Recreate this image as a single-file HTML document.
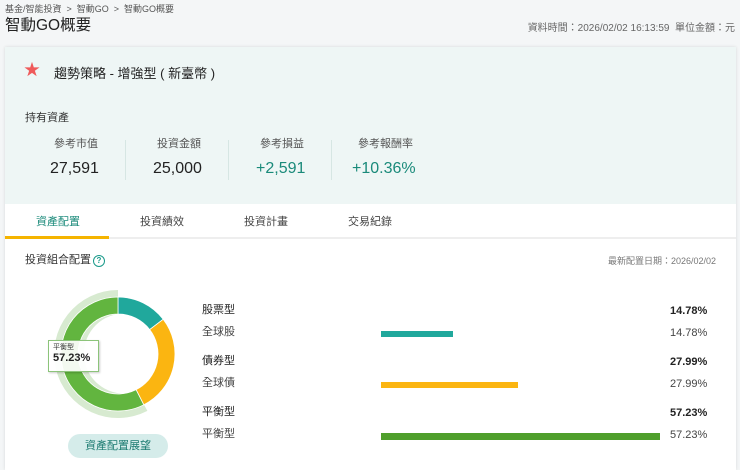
<!DOCTYPE html><html><head><meta charset="utf-8"><style>
*{margin:0;padding:0;box-sizing:border-box}
body{width:740px;height:470px;overflow:hidden;background:#f4f6f7;font-family:"Liberation Sans","Noto Sans CJK TC",sans-serif;color:#333;position:relative}
.a{position:absolute;white-space:nowrap;line-height:1.2}
</style></head><body>
<div class="a" style="left:5px;top:4px;font-size:9px;color:#555">基金/智能投資 &nbsp;&gt;&nbsp; 智動GO &nbsp;&gt;&nbsp; 智動GO概要</div>
<div class="a" style="left:5px;top:17px;font-size:15.5px;color:#222">智動GO概要</div>
<div class="a" style="right:5px;top:23px;font-size:10px;color:#666">資料時間：2026/02/02 16:13:59 &nbsp;單位金額：元</div>
<div class="a" style="left:5px;top:47px;width:731px;height:423px;background:#fff;box-shadow:0 0 3px rgba(0,0,0,.12)"></div>
<div class="a" style="left:5px;top:47px;width:731px;height:157px;background:#eef6f5"></div>
<div class="a" style="left:24px;top:61px;color:#ef5a5a;font-size:16px">★</div>
<div class="a" style="left:54px;top:66px;font-size:13px;color:#222">趨勢策略 - 增強型 ( 新臺幣 )</div>
<div class="a" style="left:25px;top:112px;font-size:11px;color:#333">持有資產</div>
<div class="a" style="left:54px;top:138px;font-size:11px;color:#555">參考市值</div>
<div class="a" style="left:157px;top:138px;font-size:11px;color:#555">投資金額</div>
<div class="a" style="left:260px;top:138px;font-size:11px;color:#555">參考損益</div>
<div class="a" style="left:358px;top:138px;font-size:11px;color:#555">參考報酬率</div>
<div class="a" style="left:50px;top:159px;font-size:16px;color:#222">27,591</div>
<div class="a" style="left:153px;top:159px;font-size:16px;color:#222">25,000</div>
<div class="a" style="left:256px;top:159px;font-size:16px;color:#1a8a7a">+2,591</div>
<div class="a" style="left:352px;top:159px;font-size:16px;color:#1a8a7a">+10.36%</div>
<div class="a" style="left:125px;top:140px;width:1px;height:40px;background:#d6e6e3"></div>
<div class="a" style="left:228px;top:140px;width:1px;height:40px;background:#d6e6e3"></div>
<div class="a" style="left:331px;top:140px;width:1px;height:40px;background:#d6e6e3"></div>
<div class="a" style="left:5px;top:237px;width:731px;height:2px;background:#eee"></div>
<div class="a" style="left:5px;top:236px;width:104px;height:3px;background:#f5b400"></div>
<div class="a" style="left:36px;top:216px;font-size:11px;color:#1a8a7a">資產配置</div>
<div class="a" style="left:140px;top:216px;font-size:11px;color:#444">投資績效</div>
<div class="a" style="left:244px;top:216px;font-size:11px;color:#444">投資計畫</div>
<div class="a" style="left:348px;top:216px;font-size:11px;color:#444">交易紀錄</div>
<div class="a" style="left:25px;top:254px;font-size:11px;color:#333">投資組合配置</div>
<div class="a" style="left:93px;top:255px;width:12px;height:12px;border:1.3px solid #1a9a8a;border-radius:50%;font-size:8px;line-height:10px;text-align:center;color:#1a9a8a;font-weight:bold">?</div>
<div class="a" style="right:24px;top:256px;font-size:9px;color:#777">最新配置日期：2026/02/02</div>
<svg class="a" style="left:50px;top:284px" width="140" height="140" viewBox="50 284 140 140">
<path d="M118,290 A64,64 0 1,0 147.4,410.9 L136.6,391.5 A40,40 0 1,1 118,314 Z" fill="#d7ead0"/>
<path d="M118,297 A57,57 0 0,1 163.2,319.3 L149.7,329.6 A40,40 0 0,0 118,314 Z" fill="#20a89c" stroke="#fff" stroke-width="0.8"/>
<path d="M163.2,319.3 A57,57 0 0,1 143.8,404.8 L136.1,389.7 A40,40 0 0,0 149.7,329.6 Z" fill="#fbb511" stroke="#fff" stroke-width="0.8"/>
<path d="M143.8,404.8 A57,57 0 1,1 118,297 L118,314 A40,40 0 1,0 136.1,389.7 Z" fill="#62b53f" stroke="#fff" stroke-width="0.8"/>
</svg>
<div class="a" style="left:48px;top:340px;width:51px;height:32px;background:rgba(255,255,255,.92);border:1px solid #8cc47a;box-shadow:1px 1px 2px rgba(0,0,0,.2)"></div>
<div class="a" style="left:53px;top:344px;font-size:7px;color:#333">平衡型</div>
<div class="a" style="left:53px;top:352px;font-size:11px;font-weight:bold;color:#222">57.23%</div>
<div class="a" style="left:68px;top:434px;width:100px;height:24px;border-radius:12px;background:#d5ecea;color:#1a7a70;font-size:11px;text-align:center;line-height:24px">資產配置展望</div>
<div class="a" style="left:202px;top:304px;font-size:11px;color:#222">股票型</div>
<div class="a" style="left:202px;top:326px;font-size:11px;color:#444">全球股</div>
<div class="a" style="left:202px;top:355px;font-size:11px;color:#222">債券型</div>
<div class="a" style="left:202px;top:377px;font-size:11px;color:#444">全球債</div>
<div class="a" style="left:202px;top:406px;font-size:11px;color:#222">平衡型</div>
<div class="a" style="left:202px;top:428px;font-size:11px;color:#444">平衡型</div>
<div class="a" style="left:381px;top:331px;width:72px;height:6px;background:#20a89c"></div>
<div class="a" style="left:381px;top:382px;width:137px;height:6px;background:#fbb511"></div>
<div class="a" style="left:381px;top:433px;width:279px;height:7px;background:#4f9f2c"></div>
<div class="a" style="left:670px;top:305px;font-size:11px;font-weight:bold;color:#222">14.78%</div>
<div class="a" style="left:670px;top:327px;font-size:11px;color:#444">14.78%</div>
<div class="a" style="left:670px;top:356px;font-size:11px;font-weight:bold;color:#222">27.99%</div>
<div class="a" style="left:670px;top:378px;font-size:11px;color:#444">27.99%</div>
<div class="a" style="left:670px;top:407px;font-size:11px;font-weight:bold;color:#222">57.23%</div>
<div class="a" style="left:670px;top:429px;font-size:11px;color:#444">57.23%</div>
</body></html>
